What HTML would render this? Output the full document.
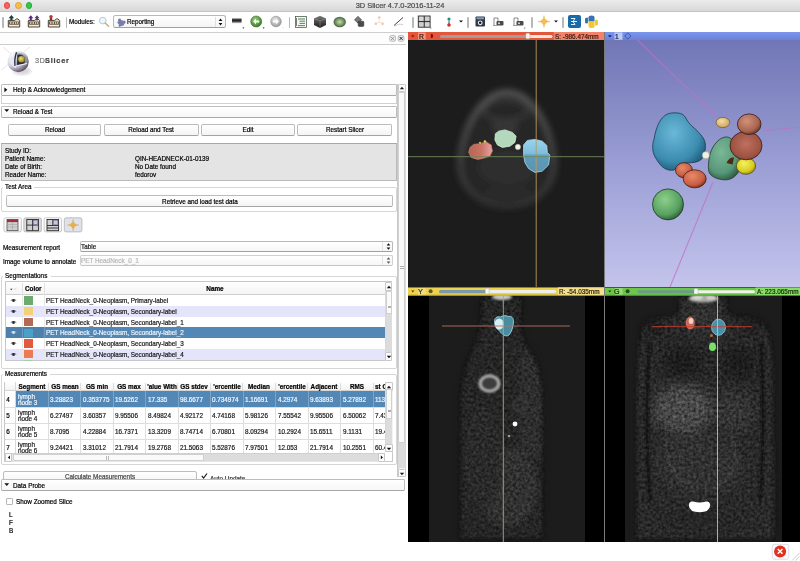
<!DOCTYPE html>
<html><head><meta charset="utf-8">
<style>
html,body{margin:0;padding:0;}
body{width:800px;height:561px;overflow:hidden;position:relative;background:#ffffff;font-family:"Liberation Sans",sans-serif;}
.t{position:absolute;white-space:nowrap;line-height:normal;-webkit-text-stroke:0.2px currentColor;will-change:transform;}
.b{position:absolute;box-sizing:border-box;}
svg{position:absolute;}
</style></head><body>

<div class="b" style="left:0px;top:0px;width:800.00px;height:11.60px;background:linear-gradient(#ececec,#d8d8d8);border-bottom:1px solid #c4c4c4;"></div>
<div class="b" style="left:3.6999999999999997px;top:2.3000000000000003px;width:6.8px;height:6.8px;border-radius:50%;background:#fc605c;border:0.5px solid #de4a46;"></div>
<div class="b" style="left:14.799999999999999px;top:2.3000000000000003px;width:6.8px;height:6.8px;border-radius:50%;background:#fdbc40;border:0.5px solid #dea236;"></div>
<div class="b" style="left:25.5px;top:2.3000000000000003px;width:6.8px;height:6.8px;border-radius:50%;background:#34c84a;border:0.5px solid #27aa35;"></div>
<div class="t" style="left:200px;width:400px;text-align:center;top:1.46px;font-size:7.45px;color:#4a4a4a;font-weight:normal;">3D Slicer 4.7.0-2016-11-24</div>
<div class="b" style="left:0px;top:11.6px;width:800.00px;height:20.40px;background:#ffffff;"></div>
<div class="b" style="left:0px;top:31.5px;width:408.00px;height:1.00px;background:#cfcfcf;"></div>
<div class="b" style="left:2.30px;top:16.5px;width:1.6px;height:11.0px;background:#b8b8b8;border-radius:0.8px;"></div>
<svg style="left:6px;top:13.9px" width="58" height="15" viewBox="0 0 58 15">
<g transform="translate(0,0)">
 <path d="M2.3 13 V6.4 H8.6 L10.6 4.9 H11.9 L13.7 6.6 V13 Z" fill="#e6dac0" stroke="#3a2e20" stroke-width="0.9" stroke-linejoin="round"/>
 <rect x="3.2" y="7.6" width="9.6" height="3" fill="#4a3e2e"/>
 <path d="M4 8.3 H5.6 V9.8 H4 Z M6.4 8.3 H8 V9.8 H6.4 Z M8.8 8.3 H10.4 V9.8 H8.8 Z M11 8.3 H12.2 V9.8 H11 Z" fill="#efe8d8"/>
 <rect x="3.2" y="11.2" width="9.6" height="0.9" fill="#f6f2e8"/>
</g>
<path d="M2.6 4.3 L5.4 1 L8.2 4.3 Z M4.3 4.2 H6.5 V6.2 H4.3 Z" fill="#1e3e38"/>
<g transform="translate(20,0)">
 <path d="M2.3 13 V6.4 H8.6 L10.6 4.9 H11.9 L13.7 6.6 V13 Z" fill="#e6dac0" stroke="#3a2e20" stroke-width="0.9" stroke-linejoin="round"/>
 <rect x="3.2" y="7.6" width="9.6" height="3" fill="#4a3e2e"/>
 <path d="M4 8.3 H5.6 V9.8 H4 Z M6.4 8.3 H8 V9.8 H6.4 Z M8.8 8.3 H10.4 V9.8 H8.8 Z M11 8.3 H12.2 V9.8 H11 Z" fill="#efe8d8"/>
 <rect x="3.2" y="11.2" width="9.6" height="0.9" fill="#f6f2e8"/>
</g>
<path d="M22.2 4.3 L24.8 1.2 L27.4 4.3 Z M23.8 4.2 H25.8 V6.2 H23.8 Z" fill="#5a2a80"/>
<path d="M28.4 4.3 L31 1.2 L33.6 4.3 Z M30 4.2 H32 V6.2 H30 Z" fill="#5a3a7a"/>
<g transform="translate(40,0)">
 <path d="M2.3 13 V6.4 H8.6 L10.6 4.9 H11.9 L13.7 6.6 V13 Z" fill="#e6dac0" stroke="#3a2e20" stroke-width="0.9" stroke-linejoin="round"/>
 <rect x="3.2" y="7.6" width="9.6" height="3" fill="#4a3e2e"/>
 <path d="M4 8.3 H5.6 V9.8 H4 Z M6.4 8.3 H8 V9.8 H6.4 Z M8.8 8.3 H10.4 V9.8 H8.8 Z M11 8.3 H12.2 V9.8 H11 Z" fill="#efe8d8"/>
 <rect x="3.2" y="11.2" width="9.6" height="0.9" fill="#f6f2e8"/>
</g>
<circle cx="45" cy="2.6" r="1.7" fill="#b83a2a"/>
<path d="M43.8 3.8 H46.2 V6.3 H43.8 Z" fill="#7a3a2a"/>
</svg>
<div class="b" style="left:65.90px;top:16.5px;width:1.6px;height:11.0px;background:#b8b8b8;border-radius:0.8px;"></div>
<div class="t" style="left:69px;top:18.1px;font-size:6.36px;color:#000;">Modules:</div>
<svg style="left:98px;top:14.5px" width="13" height="14" viewBox="0 0 13 14">
<circle cx="4.8" cy="5.6" r="3.3" fill="#eef6fa" stroke="#a8c4d4" stroke-width="0.9"/>
<path d="M7.3 8.1 L10.6 11.2" stroke="#c8b080" stroke-width="1.5" stroke-linecap="round"/>
</svg>
<div class="b" style="left:113.3px;top:15.2px;width:112.9px;height:12.5px;background:linear-gradient(#ffffff,#f4f4f4);border:1px solid #b8b8b8;border-bottom-color:#a0a0a0;border-radius:2.5px;"></div>
<div class="b" style="left:215px;top:16.5px;width:0.6px;height:10px;background:#e0e0e0;"></div>
<svg style="left:218px;top:17.5px" width="5" height="8" viewBox="0 0 5 8"><path d="M0.6 3 L4.4 3 L2.5 0.6 Z M0.6 5 L4.4 5 L2.5 7.4 Z" fill="#111"/></svg>
<svg style="left:116px;top:17px" width="10" height="10" viewBox="0 0 10 10">
<g transform="rotate(-20 5 5.5)" fill="#7a7aae">
<rect x="1.6" y="3.6" width="5.6" height="5.4" rx="0.4"/>
<circle cx="4.4" cy="2.9" r="1.6"/>
<circle cx="7.9" cy="6.3" r="1.6"/>
<circle cx="1.2" cy="6.3" r="1.1" fill="#fff"/>
</g>
</svg>
<div class="t" style="left:126.5px;top:18.1px;font-size:6.3px;color:#000;">Reporting</div>
<svg style="left:230px;top:14px" width="56" height="17" viewBox="0 0 56 17">
<defs>
<linearGradient id="hb" x1="0" y1="0" x2="0" y2="1"><stop offset="0" stop-color="#f0f0f0"/><stop offset="0.35" stop-color="#1a1a1a"/><stop offset="0.6" stop-color="#3a3a3a"/><stop offset="1" stop-color="#f4f4f4"/></linearGradient>
<radialGradient id="gg" cx="0.4" cy="0.35" r="0.7"><stop offset="0" stop-color="#9ad07a"/><stop offset="1" stop-color="#2e7a20"/></radialGradient>
<radialGradient id="gr" cx="0.4" cy="0.35" r="0.7"><stop offset="0" stop-color="#e8e8e8"/><stop offset="1" stop-color="#9a9a9a"/></radialGradient>
</defs>
<rect x="2" y="3.8" width="9.6" height="5.8" fill="url(#hb)"/>
<path d="M12.4 13.6 L14.4 13.6 L13.4 14.8 Z" fill="#111"/>
<circle cx="26.2" cy="7.5" r="5.5" fill="url(#gg)" stroke="#3a6a2a" stroke-width="0.6"/>
<path d="M23.2 7.5 L26 4.6 V6.4 H29.2 V8.6 H26 V10.4 Z" fill="#ffffff"/>
<path d="M32.6 13.6 L34.6 13.6 L33.6 14.8 Z" fill="#111"/>
<circle cx="46" cy="7.5" r="5.3" fill="url(#gr)" stroke="#8a8a8a" stroke-width="0.6"/>
<path d="M49 7.5 L46.2 4.6 V6.4 H43 V8.6 H46.2 V10.4 Z" fill="#ffffff"/>
<path d="M52.4 13.8 L53.8 13.8 L53.1 14.6 Z" fill="#aaa"/>
</svg>
<div class="b" style="left:288.70px;top:16.5px;width:1.6px;height:11.0px;background:#b8b8b8;border-radius:0.8px;"></div>
<svg style="left:293px;top:14px" width="116" height="16" viewBox="0 0 116 16">
<defs>
<linearGradient id="cube" x1="0" y1="0" x2="0" y2="1"><stop offset="0" stop-color="#7a7a7a"/><stop offset="1" stop-color="#1a1a1a"/></linearGradient>
<radialGradient id="vr" cx="0.5" cy="0.5" r="0.6"><stop offset="0" stop-color="#c8e0b0"/><stop offset="0.6" stop-color="#6a8a5a"/><stop offset="1" stop-color="#2a3a2a"/></radialGradient>
</defs>
<rect x="2.5" y="2.5" width="11" height="11" fill="#f4f8f0" stroke="#3a4a3a" stroke-width="0.7"/>
<path d="M5 5 H12 M6.5 7.2 H12 M6.5 9.4 H12 M5 11.6 H12" stroke="#2a6a4a" stroke-width="0.8"/>
<path d="M3.5 4 V12" stroke="#2a2a2a" stroke-width="0.6"/>
<path d="M21 4.5 L27 1.8 L33 4.5 L33 11 L27 14 L21 11 Z" fill="url(#cube)"/>
<path d="M21 4.5 L27 7 L33 4.5 M27 7 V14" stroke="#9a9a9a" stroke-width="0.5" fill="none"/>
<ellipse cx="46.7" cy="8" rx="6.2" ry="5.3" fill="url(#vr)"/>
<path d="M61.5 5.8 L65 2.4 L68.5 5.8 L65 9.2 Z" fill="#7a7a7a" stroke="#3a3a3a" stroke-width="0.7"/>
<rect x="65.2" y="7.2" width="5.6" height="5.2" rx="0.8" fill="#4a4a4a" stroke="#2a2a2a" stroke-width="0.5"/>
<circle cx="86.2" cy="3.6" r="1.3" fill="#f4c4a8"/>
<circle cx="82.8" cy="9.8" r="1.3" fill="#f4c4a8"/>
<circle cx="89.6" cy="9.8" r="1.3" fill="#f4c4a8"/>
<path d="M86.2 5.5 V7.5 M84 8.5 L88.4 8.5" stroke="#e8c0a8" stroke-width="0.5"/>
<path d="M101 11.5 L110 3.5" stroke="#2a2a2a" stroke-width="0.9"/>
<path d="M102 12 Q106 9 110 10.5" stroke="#c8a0a0" stroke-width="0.6" fill="none"/>
</svg>
<div class="b" style="left:412.20px;top:16.5px;width:1.6px;height:11.0px;background:#b8b8b8;border-radius:0.8px;"></div>
<svg style="left:416px;top:14px" width="58" height="17" viewBox="0 0 58 17">
<rect x="2.3" y="2" width="11.8" height="11.2" fill="#b8b8b8" stroke="#2a2a2a" stroke-width="0.9"/>
<path d="M8.2 2 V13.2 M2.3 7.6 H14.1" stroke="#2a2a2a" stroke-width="1"/>
<rect x="3.2" y="2.8" width="4.2" height="4" fill="#d8d8d8"/>
<rect x="9" y="2.8" width="4.3" height="4" fill="#cfcfcf"/>
<rect x="3.2" y="8.4" width="4.2" height="4" fill="#d0d0d0"/>
<rect x="9" y="8.4" width="4.3" height="4" fill="#d4d4d4"/>
<path d="M14.2 13.8 L15.6 13.8 L14.9 14.8 Z" fill="#111"/>
<circle cx="33" cy="5" r="1.6" fill="#2a8a7a"/>
<path d="M33 6.5 V10" stroke="#2a5a5a" stroke-width="1"/>
<circle cx="33" cy="11" r="1.8" fill="#d03030"/>
<path d="M43 6.4 L47 6.4 L45 8.6 Z" fill="#111"/>
</svg>
<div class="b" style="left:467.20px;top:16.5px;width:1.6px;height:11.0px;background:#b8b8b8;border-radius:0.8px;"></div>
<svg style="left:472px;top:14px" width="60" height="17" viewBox="0 0 60 17">
<rect x="3.5" y="2.5" width="9.5" height="10" rx="1" fill="#2a3a4a"/>
<rect x="4.5" y="3.3" width="7.5" height="2" fill="#8a9ab0"/>
<circle cx="8.2" cy="8.8" r="2.4" fill="#f0f0f0"/>
<circle cx="8.2" cy="8.8" r="1.3" fill="#1a1a1a"/>
<path d="M22 11 L22 4 L26 4 L26 7" stroke="#5a5a5a" stroke-width="0.7" fill="none"/>
<rect x="24.5" y="7" width="7" height="4.5" rx="1" fill="#4a4a4a"/>
<circle cx="27" cy="9.2" r="1" fill="#ddd"/>
<path d="M21 11.5 H25" stroke="#5a5a5a" stroke-width="0.6"/>
<path d="M42 11 L42 4 L46 4 L46 7" stroke="#5a5a5a" stroke-width="0.7" fill="none"/>
<rect x="44.5" y="7" width="7" height="4.5" rx="1" fill="#4a4a4a"/>
<circle cx="47" cy="9.2" r="1" fill="#ddd"/>
<path d="M41 11.5 H45" stroke="#5a5a5a" stroke-width="0.6"/>
<path d="M52 13.8 L53.6 13.8 L52.8 14.8 Z" fill="#111"/>
</svg>
<div class="b" style="left:531.20px;top:16.5px;width:1.6px;height:11.0px;background:#b8b8b8;border-radius:0.8px;"></div>
<svg style="left:535px;top:14px" width="70" height="17" viewBox="0 0 70 17">
<path d="M9 1.6 Q9.2 7.2 15 7.6 Q9.2 8 9 13.6 Q8.8 8 3 7.6 Q8.8 7.2 9 1.6 Z" fill="#f2c050" stroke="#d8a040" stroke-width="0.35"/>
<path d="M19 6.4 L23 6.4 L21 8.6 Z" fill="#111"/>
<rect x="33" y="1" width="13" height="13" rx="2" fill="#1a6aa8"/>
<path d="M36 4.5 H40 M36 7.5 H42 M36 10.5 H40 M40 4.5 L38 7.5 L40 10.5" stroke="#ffffff" stroke-width="0.9" fill="none"/>
<path d="M53.5 7 V3.5 Q53.5 1.5 56.5 1.5 Q59.5 1.5 59.5 3.5 V7.5 H54.5 Q53.5 7.5 53.5 7 Z" fill="#3a72b0"/>
<path d="M53.5 7.5 H58.5 Q59.5 7.5 59.5 8 V13 Q59.5 14 56.5 14 Q53.5 14 53.5 12 V8" fill="#f2c830"/>
<path d="M50 5 Q50 3.5 53 3.5 V8.5 Q53 9.5 51.5 9.5 Q50 9.5 50 8 Z" fill="#3a72b0"/>
<path d="M63 10 Q63 11.5 60 11.5 V6.5 Q60 5.5 61.5 5.5 Q63 5.5 63 7 Z" fill="#f2c830"/>
</svg>
<div class="b" style="left:562.20px;top:16.5px;width:1.6px;height:11.0px;background:#b8b8b8;border-radius:0.8px;"></div>
<div class="b" style="left:0.00px;top:32.00px;width:405.50px;height:13.00px;background:#fdfdfd;border-top:1px solid #cfcfcf;border-bottom:1px solid #cdcdcd;"></div>
<svg style="left:388.5px;top:34.5px" width="17" height="7" viewBox="0 0 17 7">
<rect x="0.7" y="0.5" width="5.8" height="5.8" rx="1.6" fill="#ececec" stroke="#9a9a9a" stroke-width="0.6"/>
<path d="M2 2 L5.2 5 M5.2 2 L2 5" stroke="#6a6a6a" stroke-width="0.6"/>
<rect x="9.2" y="0.5" width="5.8" height="5.8" rx="1.6" fill="#ececec" stroke="#9a9a9a" stroke-width="0.6"/>
<path d="M10.6 1.9 L13.6 4.9 M13.6 1.9 L10.6 4.9" stroke="#2a2a2a" stroke-width="1"/>
</svg>
<svg style="left:0px;top:44px" width="75" height="40" viewBox="0 0 40 40" preserveAspectRatio="xMinYMin meet">
<defs>
<radialGradient id="lg1" cx="0.3" cy="0.25" r="0.85"><stop offset="0" stop-color="#ffffff"/><stop offset="0.55" stop-color="#d4d4e0"/><stop offset="0.85" stop-color="#7a6a80"/><stop offset="1" stop-color="#4a3a48"/></radialGradient>
<radialGradient id="lg2" cx="0.4" cy="0.4" r="0.7"><stop offset="0" stop-color="#f0e060"/><stop offset="1" stop-color="#8a7a20"/></radialGradient>
<filter id="lgs"><feGaussianBlur stdDeviation="1.8"/></filter>
</defs>
<ellipse cx="22" cy="27" rx="9" ry="4" fill="#a8a8b0" opacity="0.45" filter="url(#lgs)"/>
<path d="M3 3 L32 28 M1 26 L30 3" stroke="#e4dce8" stroke-width="0.8"/>
<circle cx="18.2" cy="17.6" r="10.6" fill="url(#lg1)"/>
<path d="M8 17 L16 8.4 L15.5 24.5 Z" fill="#e8e8f0"/>
<path d="M16.6 8.2 Q14.2 14 15 22" stroke="#2a3048" stroke-width="1.4" fill="none"/>
<path d="M17 9.5 Q24 8 27 15 L26 21 L16.2 22.5 Z" fill="#8a90a8"/>
<path d="M17.5 11 Q22.5 9.5 25 14.5 L24.5 19.5 L17 21 Z" fill="#2a2a30"/>
<circle cx="21.5" cy="15.2" r="3.3" fill="url(#lg2)"/>
<path d="M15.2 22.3 L27 19.5" stroke="#f4f4f8" stroke-width="1.1"/>
</svg>
<div class="t" style="left:34.6px;top:55.6px;font-size:7.4px;color:#7a7a7a;letter-spacing:0.3px;">3D<span style="color:#3e3e3e;font-weight:bold;letter-spacing:0.75px;">Slicer</span></div>
<div class="b" style="left:397.50px;top:83.80px;width:8.00px;height:393.20px;background:#f6f6f6;border-left:1px solid #d8d8d8;border-right:1px solid #d8d8d8;"></div>
<div class="b" style="left:396.90px;top:83.80px;width:0.70px;height:393.20px;background:#c8c8c8;"></div>
<div class="b" style="left:397.50px;top:83.80px;width:8.00px;height:8.20px;background:#fcfcfc;border:1px solid #c8c8c8;border-radius:1.5px;"></div>
<svg style="left:398.5px;top:86px" width="6" height="4" viewBox="0 0 6 4"><path d="M0.8 3.2 L5.2 3.2 L3 0.8 Z" fill="#1a1a1a"/></svg>
<div class="b" style="left:398.50px;top:92.00px;width:6.00px;height:376.00px;background:#dcdcdc;"></div>
<div class="b" style="left:398.30px;top:92.00px;width:6.40px;height:350.50px;background:#fafafa;border:0.6px solid #d0d0d0;border-radius:1px;"></div>
<div class="b" style="left:399.5px;top:265.5px;width:4px;height:3px;border-top:0.6px solid #b0b0b0;border-bottom:0.6px solid #b0b0b0;"></div>
<div class="b" style="left:397.50px;top:468.50px;width:8.00px;height:8.50px;background:#fcfcfc;border:1px solid #c8c8c8;border-radius:1.5px;"></div>
<svg style="left:398.5px;top:471.5px" width="6" height="4" viewBox="0 0 6 4"><path d="M0.8 0.8 L5.2 0.8 L3 3.2 Z" fill="#1a1a1a"/></svg>
<div class="b" style="left:0.50px;top:84.00px;width:396.50px;height:11.50px;background:linear-gradient(#ffffff,#f7f7f7);border:1px solid #bdbdbd;border-bottom-color:#a8a8a8;border-radius:1.5px;"></div>
<svg style="left:4px;top:86.80px" width="4" height="6" viewBox="0 0 4 6"><path d="M0.4 0.4 L3.4 2.8 L0.4 5.2 Z" fill="#111"/></svg>
<div class="t" style="left:12.50px;top:86.45px;font-size:6.35px;color:#000;font-weight:normal;">Help &amp; Acknowledgement</div>
<div class="b" style="left:0.50px;top:95.50px;width:396.50px;height:8.00px;border:1px solid #d0d0d0;border-top:none;"></div>
<div class="b" style="left:0.50px;top:106.00px;width:396.50px;height:11.50px;background:linear-gradient(#ffffff,#f7f7f7);border:1px solid #bdbdbd;border-bottom-color:#a8a8a8;border-radius:1.5px;"></div>
<svg style="left:3.5px;top:109.40px" width="6" height="4" viewBox="0 0 6 4"><path d="M0.3 0.3 L5.2 0.3 L2.75 3.1 Z" fill="#111"/></svg>
<div class="t" style="left:12.50px;top:108.45px;font-size:6.35px;color:#000;font-weight:normal;">Reload &amp; Test</div>
<div class="b" style="left:7.80px;top:124.40px;width:93.60px;height:11.60px;background:linear-gradient(#ffffff,#f4f4f4);border:1px solid #bcbcbc;border-bottom-color:#a4a4a4;border-radius:2px;"></div>
<div class="t" style="left:-95.40px;width:300px;text-align:center;top:126.35px;font-size:6.35px;color:#000;font-weight:normal;">Reload</div>
<div class="b" style="left:103.50px;top:124.40px;width:95.00px;height:11.60px;background:linear-gradient(#ffffff,#f4f4f4);border:1px solid #bcbcbc;border-bottom-color:#a4a4a4;border-radius:2px;"></div>
<div class="t" style="left:1.00px;width:300px;text-align:center;top:126.35px;font-size:6.35px;color:#000;font-weight:normal;">Reload and Test</div>
<div class="b" style="left:200.60px;top:124.40px;width:94.80px;height:11.60px;background:linear-gradient(#ffffff,#f4f4f4);border:1px solid #bcbcbc;border-bottom-color:#a4a4a4;border-radius:2px;"></div>
<div class="t" style="left:98.00px;width:300px;text-align:center;top:126.35px;font-size:6.35px;color:#000;font-weight:normal;">Edit</div>
<div class="b" style="left:297.40px;top:124.40px;width:94.50px;height:11.60px;background:linear-gradient(#ffffff,#f4f4f4);border:1px solid #bcbcbc;border-bottom-color:#a4a4a4;border-radius:2px;"></div>
<div class="t" style="left:194.65px;width:300px;text-align:center;top:126.35px;font-size:6.35px;color:#000;font-weight:normal;">Restart Slicer</div>
<div class="b" style="left:0.50px;top:143.30px;width:396.90px;height:38.20px;background:#e4e4e4;border:1px solid #bababa;border-top-color:#a8a8a8;"></div>
<div class="t" style="left:4.80px;top:147.45px;font-size:6.35px;color:#000;font-weight:normal;">Study ID:</div>
<div class="t" style="left:4.80px;top:155.30px;font-size:6.35px;color:#000;font-weight:normal;">Patient Name:</div>
<div class="t" style="left:134.60px;top:155.30px;font-size:6.35px;color:#000;font-weight:normal;">QIN-HEADNECK-01-0139</div>
<div class="t" style="left:4.80px;top:163.15px;font-size:6.35px;color:#000;font-weight:normal;">Date of Birth:</div>
<div class="t" style="left:134.60px;top:163.15px;font-size:6.35px;color:#000;font-weight:normal;">No Date found</div>
<div class="t" style="left:4.80px;top:171.00px;font-size:6.35px;color:#000;font-weight:normal;">Reader Name:</div>
<div class="t" style="left:134.60px;top:171.00px;font-size:6.35px;color:#000;font-weight:normal;">fedorov</div>
<div class="b" style="left:0.8px;top:187.40px;width:396.4px;height:24.20px;border:1px solid #d6d6d6;border-radius:2px;"></div>
<div class="b" style="left:3.00px;top:183.40px;width:30.50px;height:7.00px;background:#fff;"></div>
<div class="t" style="left:4.80px;top:183.25px;font-size:6.35px;color:#000;font-weight:normal;">Test Area</div>
<div class="b" style="left:6.00px;top:195.20px;width:387.00px;height:11.80px;background:linear-gradient(#ffffff,#f4f4f4);border:1px solid #bcbcbc;border-bottom-color:#a4a4a4;border-radius:2px;"></div>
<div class="t" style="left:49.50px;width:300px;text-align:center;top:197.85px;font-size:6.35px;color:#000;font-weight:normal;">Retrieve and load test data</div>
<svg style="left:3px;top:216.5px" width="80" height="16" viewBox="0 0 80 16">
<defs><linearGradient id="btng" x1="0" y1="0" x2="0" y2="1"><stop offset="0" stop-color="#ffffff"/><stop offset="1" stop-color="#f2f2f2"/></linearGradient></defs>
<rect x="0.9" y="0.8" width="17.5" height="14.1" rx="1.8" fill="url(#btng)" stroke="#b4b4b4" stroke-width="0.7"/>
<rect x="20.8" y="0.8" width="17.6" height="14.1" rx="1.8" fill="#dcdcdc" stroke="#a8a8a8" stroke-width="0.7"/>
<rect x="41.1" y="0.8" width="17.5" height="14.1" rx="1.8" fill="url(#btng)" stroke="#b4b4b4" stroke-width="0.7"/>
<rect x="61.3" y="0.8" width="17.6" height="14.1" rx="1.8" fill="#dfe2ea" stroke="#a8a8a8" stroke-width="0.7"/>
<!-- icon1 table -->
<rect x="4" y="2.5" width="11" height="11.2" fill="#cfcfcf" stroke="#3a3a3a" stroke-width="0.7"/>
<rect x="4" y="2.5" width="11" height="2.6" fill="#a0303a"/>
<path d="M4 7.5 H15 M4 10 H15 M9.5 5 V13.7" stroke="#9a9a9a" stroke-width="0.5"/>
<!-- icon2 grid -->
<rect x="23.8" y="2.5" width="11.6" height="11.2" fill="#d0d0d0" stroke="#2a2a2a" stroke-width="0.9"/>
<path d="M29.6 2.5 V13.7 M23.8 8.1 H35.4" stroke="#2a2a2a" stroke-width="0.9"/>
<rect x="30.4" y="3.3" width="4.3" height="4" fill="#c8c8e0" stroke="#4a4a8a" stroke-width="0.4"/>
<!-- icon3 -->
<rect x="44" y="2.5" width="11.6" height="11.2" fill="#d0d0d0" stroke="#2a2a2a" stroke-width="0.9"/>
<path d="M49.8 2.5 V8.5 M44 8.5 H55.6 M44 11 H55.6" stroke="#2a2a2a" stroke-width="0.9"/>
<rect x="50.6" y="3.3" width="4.3" height="4.4" fill="#c8c8e0" stroke="#4a4a8a" stroke-width="0.4"/>
<!-- icon4 star -->
<path d="M70.1 2.4 Q70.3 7.8 75.8 8 Q70.3 8.2 70.1 13.6 Q69.9 8.2 64.4 8 Q69.9 7.8 70.1 2.4 Z" fill="#eab048" stroke="#d09838" stroke-width="0.35"/>
</svg>
<div class="t" style="left:3.10px;top:243.55px;font-size:6.35px;color:#000;font-weight:normal;">Measurement report</div>
<div class="t" style="left:3.10px;top:257.85px;font-size:6.35px;color:#000;font-weight:normal;">Image volume to annotate</div>
<div class="b" style="left:79.6px;top:241.40px;width:313.7px;height:11.00px;background:linear-gradient(#ffffff,#f6f6f6);border:1px solid #b8b8b8;border-bottom-color:#a0a0a0;border-radius:2px;"></div>
<div class="b" style="left:382.40px;top:242.40px;width:0.50px;height:9.00px;background:#e4e4e4;"></div>
<svg style="left:385.5px;top:243.40px" width="5" height="7" viewBox="0 0 5 7"><path d="M0.6 2.6 L4.4 2.6 L2.5 0.3 Z M0.6 4.4 L4.4 4.4 L2.5 6.7 Z" fill="#111"/></svg>
<div class="t" style="left:81.30px;top:243.45px;font-size:6.35px;color:#1a1a1a;font-weight:normal;">Table</div>
<div class="b" style="left:79.6px;top:255.30px;width:313.7px;height:11.00px;background:linear-gradient(#ffffff,#f6f6f6);border:1px solid #d0d0d0;border-bottom-color:#c4c4c4;border-radius:2px;"></div>
<div class="b" style="left:382.40px;top:256.30px;width:0.50px;height:9.00px;background:#e4e4e4;"></div>
<svg style="left:385.5px;top:257.30px" width="5" height="7" viewBox="0 0 5 7"><path d="M0.6 2.6 L4.4 2.6 L2.5 0.3 Z M0.6 4.4 L4.4 4.4 L2.5 6.7 Z" fill="#5a5a5a"/></svg>
<div class="t" style="left:81.30px;top:257.35px;font-size:6.35px;color:#b8b8b8;font-weight:normal;">PET HeadNeck_0_1</div>
<div class="b" style="left:0.8px;top:276.20px;width:396.4px;height:92.40px;border:1px solid #d6d6d6;border-radius:2px;"></div>
<div class="b" style="left:3.00px;top:272.20px;width:47.50px;height:7.00px;background:#fff;"></div>
<div class="t" style="left:4.80px;top:272.05px;font-size:6.35px;color:#000;font-weight:normal;">Segmentations</div>
<div class="b" style="left:4.80px;top:281.30px;width:387.60px;height:80.20px;background:#fff;border:1px solid #c8c8c8;"></div>
<div class="b" style="left:5.50px;top:282.00px;width:379.80px;height:13.20px;background:linear-gradient(#ffffff,#f4f4f4);border-bottom:1px solid #d0d0d0;"></div>
<div class="b" style="left:22.30px;top:283.00px;width:0.50px;height:11.50px;background:#e0e0e0;"></div>
<div class="b" style="left:43.50px;top:283.00px;width:0.50px;height:11.50px;background:#e0e0e0;"></div>
<svg style="left:9px;top:285.5px" width="9" height="6" viewBox="0 0 9 6"><path d="M1 2.8 L3.6 2.8 L2.3 4.3 Z" fill="#3a3a3a"/><path d="M5 2.6 L6 3.8 L7.2 1.8" stroke="#bbb" stroke-width="0.5" fill="none"/></svg>
<div class="t" style="left:25.00px;top:285.25px;font-size:6.35px;color:#000;font-weight:bold;">Color</div>
<div class="t" style="left:64.50px;width:300px;text-align:center;top:285.25px;font-size:6.35px;color:#000;font-weight:bold;">Name</div>
<div class="b" style="left:5.50px;top:295.20px;width:379.80px;height:10.72px;background:#ffffff;"></div>
<div class="b" style="left:22.30px;top:295.20px;width:0.50px;height:10.72px;background:#e8e8e8;"></div>
<div class="b" style="left:43.50px;top:295.20px;width:0.50px;height:10.72px;background:#e8e8e8;"></div>
<svg style="left:10px;top:298.20px" width="7" height="5" viewBox="0 0 7 5"><path d="M0.3 2.6 Q3.5 -0.6 6.7 2.6 Q5.5 2.2 3.5 2.2 Q1.5 2.2 0.3 2.6 Z" fill="#2a2a2a"/><circle cx="3.5" cy="2.7" r="1.3" fill="#2a2a2a"/></svg>
<div class="b" style="left:24.20px;top:296.40px;width:8.80px;height:8.32px;background:#6daa6e;"></div>
<div class="t" style="left:46.00px;top:297.15px;font-size:6.35px;color:#1a1a1a;font-weight:normal;">PET HeadNeck_0-Neoplasm, Primary-label</div>
<div class="b" style="left:5.50px;top:305.92px;width:379.80px;height:10.72px;background:#e4e4fb;"></div>
<div class="b" style="left:22.30px;top:305.92px;width:0.50px;height:10.72px;background:#e8e8e8;"></div>
<div class="b" style="left:43.50px;top:305.92px;width:0.50px;height:10.72px;background:#e8e8e8;"></div>
<svg style="left:10px;top:308.92px" width="7" height="5" viewBox="0 0 7 5"><path d="M0.3 2.6 Q3.5 -0.6 6.7 2.6 Q5.5 2.2 3.5 2.2 Q1.5 2.2 0.3 2.6 Z" fill="#2a2a2a"/><circle cx="3.5" cy="2.7" r="1.3" fill="#2a2a2a"/></svg>
<div class="b" style="left:24.20px;top:307.12px;width:8.80px;height:8.32px;background:#f4cf7c;"></div>
<div class="t" style="left:46.00px;top:307.87px;font-size:6.35px;color:#1a1a1a;font-weight:normal;">PET HeadNeck_0-Neoplasm, Secondary-label</div>
<div class="b" style="left:5.50px;top:316.64px;width:379.80px;height:10.72px;background:#ffffff;"></div>
<div class="b" style="left:22.30px;top:316.64px;width:0.50px;height:10.72px;background:#e8e8e8;"></div>
<div class="b" style="left:43.50px;top:316.64px;width:0.50px;height:10.72px;background:#e8e8e8;"></div>
<svg style="left:10px;top:319.64px" width="7" height="5" viewBox="0 0 7 5"><path d="M0.3 2.6 Q3.5 -0.6 6.7 2.6 Q5.5 2.2 3.5 2.2 Q1.5 2.2 0.3 2.6 Z" fill="#2a2a2a"/><circle cx="3.5" cy="2.7" r="1.3" fill="#2a2a2a"/></svg>
<div class="b" style="left:24.20px;top:317.84px;width:8.80px;height:8.32px;background:#b26a52;"></div>
<div class="t" style="left:46.00px;top:318.59px;font-size:6.35px;color:#1a1a1a;font-weight:normal;">PET HeadNeck_0-Neoplasm, Secondary-label_1</div>
<div class="b" style="left:5.50px;top:327.36px;width:379.80px;height:10.72px;background:#5387b6;"></div>
<div class="b" style="left:5.50px;top:327.36px;width:16.80px;height:10.72px;background:#4d80ad;"></div>
<div class="b" style="left:22.80px;top:327.36px;width:20.70px;height:10.72px;background:#4d80ad;"></div>
<div class="b" style="left:22.30px;top:327.36px;width:0.50px;height:10.72px;background:#6a98c0;"></div>
<div class="b" style="left:43.50px;top:327.36px;width:0.50px;height:10.72px;background:#6a98c0;"></div>
<svg style="left:10px;top:330.36px" width="7" height="5" viewBox="0 0 7 5"><path d="M0.3 2.6 Q3.5 -0.6 6.7 2.6 Q5.5 2.2 3.5 2.2 Q1.5 2.2 0.3 2.6 Z" fill="#d8e8f0"/><circle cx="3.5" cy="2.7" r="1.3" fill="#d8e8f0"/></svg>
<div class="b" style="left:24.20px;top:328.56px;width:8.80px;height:8.32px;background:#4aa0c8;"></div>
<div class="t" style="left:46.00px;top:329.31px;font-size:6.35px;color:#eaf2fa;font-weight:normal;">PET HeadNeck_0-Neoplasm, Secondary-label_2</div>
<div class="b" style="left:5.50px;top:338.08px;width:379.80px;height:10.72px;background:#ffffff;"></div>
<div class="b" style="left:22.30px;top:338.08px;width:0.50px;height:10.72px;background:#e8e8e8;"></div>
<div class="b" style="left:43.50px;top:338.08px;width:0.50px;height:10.72px;background:#e8e8e8;"></div>
<svg style="left:10px;top:341.08px" width="7" height="5" viewBox="0 0 7 5"><path d="M0.3 2.6 Q3.5 -0.6 6.7 2.6 Q5.5 2.2 3.5 2.2 Q1.5 2.2 0.3 2.6 Z" fill="#2a2a2a"/><circle cx="3.5" cy="2.7" r="1.3" fill="#2a2a2a"/></svg>
<div class="b" style="left:24.20px;top:339.28px;width:8.80px;height:8.32px;background:#e05a40;"></div>
<div class="t" style="left:46.00px;top:340.03px;font-size:6.35px;color:#1a1a1a;font-weight:normal;">PET HeadNeck_0-Neoplasm, Secondary-label_3</div>
<div class="b" style="left:5.50px;top:348.80px;width:379.80px;height:10.72px;background:#e4e4fb;"></div>
<div class="b" style="left:22.30px;top:348.80px;width:0.50px;height:10.72px;background:#e8e8e8;"></div>
<div class="b" style="left:43.50px;top:348.80px;width:0.50px;height:10.72px;background:#e8e8e8;"></div>
<svg style="left:10px;top:351.80px" width="7" height="5" viewBox="0 0 7 5"><path d="M0.3 2.6 Q3.5 -0.6 6.7 2.6 Q5.5 2.2 3.5 2.2 Q1.5 2.2 0.3 2.6 Z" fill="#2a2a2a"/><circle cx="3.5" cy="2.7" r="1.3" fill="#2a2a2a"/></svg>
<div class="b" style="left:24.20px;top:350.00px;width:8.80px;height:8.32px;background:#ec7a52;"></div>
<div class="t" style="left:46.00px;top:350.75px;font-size:6.35px;color:#1a1a1a;font-weight:normal;">PET HeadNeck_0-Neoplasm, Secondary-label_4</div>
<div class="b" style="left:24.20px;top:360.20px;width:8.80px;height:0.80px;background:#a8d0a8;"></div>
<div class="b" style="left:385.30px;top:282.00px;width:6.70px;height:79.00px;background:#f2f2f2;border-left:1px solid #d8d8d8;"></div>
<div class="b" style="left:385.30px;top:282.00px;width:6.70px;height:9.00px;background:#fcfcfc;border:1px solid #c8c8c8;border-radius:1px;"></div>
<svg style="left:386px;top:284.5px" width="6" height="4" viewBox="0 0 6 4"><path d="M0.8 3.2 L5.2 3.2 L3 0.8 Z" fill="#111"/></svg>
<div class="b" style="left:386.00px;top:291.00px;width:6.00px;height:61.00px;background:#dcdcdc;"></div>
<div class="b" style="left:386.00px;top:291.00px;width:6.00px;height:23.00px;background:#fafafa;border:0.6px solid #d0d0d0;"></div>
<div class="b" style="left:387.5px;top:305.5px;width:3px;height:2.5px;border-top:0.5px solid #b0b0b0;border-bottom:0.5px solid #b0b0b0;"></div>
<div class="b" style="left:385.30px;top:352.00px;width:6.70px;height:9.00px;background:#fcfcfc;border:1px solid #c8c8c8;border-radius:1px;"></div>
<svg style="left:386px;top:354.5px" width="6" height="4" viewBox="0 0 6 4"><path d="M0.8 0.8 L5.2 0.8 L3 3.2 Z" fill="#111"/></svg>
<div class="b" style="left:0.8px;top:374.40px;width:396.4px;height:90.60px;border:1px solid #d6d6d6;border-radius:2px;"></div>
<div class="b" style="left:3.00px;top:370.40px;width:46.50px;height:7.00px;background:#fff;"></div>
<div class="t" style="left:4.80px;top:370.25px;font-size:6.35px;color:#000;font-weight:normal;">Measurements</div>
<div class="b" style="left:4.20px;top:381.50px;width:389.30px;height:80.50px;background:#fff;border:1px solid #c8c8c8;"></div>
<div class="b" style="left:4.80px;top:382.20px;width:380.20px;height:9.00px;background:linear-gradient(#ffffff,#f3f3f3);border-bottom:1px solid #d4d4d4;"></div>
<div class="b" style="left:4.8px;top:382.2px;width:380.2px;height:70.8px;overflow:hidden;">
<div class="b" style="left:42.90px;top:1px;width:0.6px;height:8px;background:#dcdcdc;"></div>
<div class="t" style="left:-33.10px;width:120px;text-align:center;top:0.35px;font-size:6.35px;color:#000;font-weight:bold;">Segment</div>
<div class="b" style="left:75.50px;top:1px;width:0.6px;height:8px;background:#dcdcdc;"></div>
<div class="t" style="left:-0.30px;width:120px;text-align:center;top:0.35px;font-size:6.35px;color:#000;font-weight:bold;">GS mean</div>
<div class="b" style="left:107.90px;top:1px;width:0.6px;height:8px;background:#dcdcdc;"></div>
<div class="t" style="left:32.20px;width:120px;text-align:center;top:0.35px;font-size:6.35px;color:#000;font-weight:bold;">GS min</div>
<div class="b" style="left:140.30px;top:1px;width:0.6px;height:8px;background:#dcdcdc;"></div>
<div class="t" style="left:64.60px;width:120px;text-align:center;top:0.35px;font-size:6.35px;color:#000;font-weight:bold;">GS max</div>
<div class="b" style="left:172.70px;top:1px;width:0.6px;height:8px;background:#dcdcdc;"></div>
<div class="t" style="left:97.00px;width:120px;text-align:center;top:0.35px;font-size:6.35px;color:#000;font-weight:bold;">'alue With</div>
<div class="b" style="left:205.20px;top:1px;width:0.6px;height:8px;background:#dcdcdc;"></div>
<div class="t" style="left:129.45px;width:120px;text-align:center;top:0.35px;font-size:6.35px;color:#000;font-weight:bold;">GS stdev</div>
<div class="b" style="left:237.70px;top:1px;width:0.6px;height:8px;background:#dcdcdc;"></div>
<div class="t" style="left:161.95px;width:120px;text-align:center;top:0.35px;font-size:6.35px;color:#000;font-weight:bold;">'ercentile</div>
<div class="b" style="left:270.30px;top:1px;width:0.6px;height:8px;background:#dcdcdc;"></div>
<div class="t" style="left:194.50px;width:120px;text-align:center;top:0.35px;font-size:6.35px;color:#000;font-weight:bold;">Median</div>
<div class="b" style="left:302.70px;top:1px;width:0.6px;height:8px;background:#dcdcdc;"></div>
<div class="t" style="left:227.00px;width:120px;text-align:center;top:0.35px;font-size:6.35px;color:#000;font-weight:bold;">'ercentile</div>
<div class="b" style="left:335.30px;top:1px;width:0.6px;height:8px;background:#dcdcdc;"></div>
<div class="t" style="left:259.50px;width:120px;text-align:center;top:0.35px;font-size:6.35px;color:#000;font-weight:bold;">Adjacent</div>
<div class="b" style="left:368.10px;top:1px;width:0.6px;height:8px;background:#dcdcdc;"></div>
<div class="t" style="left:292.20px;width:120px;text-align:center;top:0.35px;font-size:6.35px;color:#000;font-weight:bold;">RMS</div>
<div class="b" style="left:400.50px;top:1px;width:0.6px;height:8px;background:#dcdcdc;"></div>
<div class="t" style="left:370.20px;top:0.35px;font-size:6.35px;color:#000;font-weight:bold;">st G</div>
<div class="b" style="left:10.40px;top:9.00px;width:400px;height:16.05px;background:#5387b6;"></div>
<div class="b" style="left:0px;top:24.55px;width:400px;height:0.6px;background:#dedede;"></div>
<div class="b" style="left:43.10px;top:9.00px;width:0.6px;height:16.05px;background:#7aa4c8;"></div>
<div class="b" style="left:75.70px;top:9.00px;width:0.6px;height:16.05px;background:#7aa4c8;"></div>
<div class="b" style="left:108.10px;top:9.00px;width:0.6px;height:16.05px;background:#7aa4c8;"></div>
<div class="b" style="left:140.50px;top:9.00px;width:0.6px;height:16.05px;background:#7aa4c8;"></div>
<div class="b" style="left:172.90px;top:9.00px;width:0.6px;height:16.05px;background:#7aa4c8;"></div>
<div class="b" style="left:205.40px;top:9.00px;width:0.6px;height:16.05px;background:#7aa4c8;"></div>
<div class="b" style="left:237.90px;top:9.00px;width:0.6px;height:16.05px;background:#7aa4c8;"></div>
<div class="b" style="left:270.50px;top:9.00px;width:0.6px;height:16.05px;background:#7aa4c8;"></div>
<div class="b" style="left:302.90px;top:9.00px;width:0.6px;height:16.05px;background:#7aa4c8;"></div>
<div class="b" style="left:335.50px;top:9.00px;width:0.6px;height:16.05px;background:#7aa4c8;"></div>
<div class="b" style="left:368.30px;top:9.00px;width:0.6px;height:16.05px;background:#7aa4c8;"></div>
<div class="t" style="left:-56.80px;width:120px;text-align:center;top:13.85px;font-size:6.35px;color:#000;font-weight:normal;">4</div>
<div class="t" style="left:13.50px;top:11.65px;font-size:6.35px;color:#f0f6fc;font-weight:normal;line-height:6.1px;">lymph<br>node 3</div>
<div class="t" style="left:45.40px;top:13.75px;font-size:6.35px;color:#f0f6fc;font-weight:normal;">3.28823</div>
<div class="t" style="left:78.00px;top:13.75px;font-size:6.35px;color:#f0f6fc;font-weight:normal;">0.353775</div>
<div class="t" style="left:110.40px;top:13.75px;font-size:6.35px;color:#f0f6fc;font-weight:normal;">19.5262</div>
<div class="t" style="left:142.80px;top:13.75px;font-size:6.35px;color:#f0f6fc;font-weight:normal;">17.335</div>
<div class="t" style="left:175.20px;top:13.75px;font-size:6.35px;color:#f0f6fc;font-weight:normal;">98.6677</div>
<div class="t" style="left:207.70px;top:13.75px;font-size:6.35px;color:#f0f6fc;font-weight:normal;">0.734974</div>
<div class="t" style="left:240.20px;top:13.75px;font-size:6.35px;color:#f0f6fc;font-weight:normal;">1.16691</div>
<div class="t" style="left:272.80px;top:13.75px;font-size:6.35px;color:#f0f6fc;font-weight:normal;">4.2974</div>
<div class="t" style="left:305.20px;top:13.75px;font-size:6.35px;color:#f0f6fc;font-weight:normal;">9.63893</div>
<div class="t" style="left:337.80px;top:13.75px;font-size:6.35px;color:#f0f6fc;font-weight:normal;">5.27892</div>
<div class="t" style="left:370.60px;top:13.75px;font-size:6.35px;color:#f0f6fc;font-weight:normal;">113.</div>
<div class="b" style="left:0px;top:40.60px;width:400px;height:0.6px;background:#dedede;"></div>
<div class="b" style="left:43.10px;top:25.05px;width:0.6px;height:16.05px;background:#dedede;"></div>
<div class="b" style="left:75.70px;top:25.05px;width:0.6px;height:16.05px;background:#dedede;"></div>
<div class="b" style="left:108.10px;top:25.05px;width:0.6px;height:16.05px;background:#dedede;"></div>
<div class="b" style="left:140.50px;top:25.05px;width:0.6px;height:16.05px;background:#dedede;"></div>
<div class="b" style="left:172.90px;top:25.05px;width:0.6px;height:16.05px;background:#dedede;"></div>
<div class="b" style="left:205.40px;top:25.05px;width:0.6px;height:16.05px;background:#dedede;"></div>
<div class="b" style="left:237.90px;top:25.05px;width:0.6px;height:16.05px;background:#dedede;"></div>
<div class="b" style="left:270.50px;top:25.05px;width:0.6px;height:16.05px;background:#dedede;"></div>
<div class="b" style="left:302.90px;top:25.05px;width:0.6px;height:16.05px;background:#dedede;"></div>
<div class="b" style="left:335.50px;top:25.05px;width:0.6px;height:16.05px;background:#dedede;"></div>
<div class="b" style="left:368.30px;top:25.05px;width:0.6px;height:16.05px;background:#dedede;"></div>
<div class="t" style="left:-56.80px;width:120px;text-align:center;top:29.90px;font-size:6.35px;color:#000;font-weight:normal;">5</div>
<div class="t" style="left:13.50px;top:27.70px;font-size:6.35px;color:#1a1a1a;font-weight:normal;line-height:6.1px;">lymph<br>node 4</div>
<div class="t" style="left:45.40px;top:29.80px;font-size:6.35px;color:#1a1a1a;font-weight:normal;">6.27497</div>
<div class="t" style="left:78.00px;top:29.80px;font-size:6.35px;color:#1a1a1a;font-weight:normal;">3.60357</div>
<div class="t" style="left:110.40px;top:29.80px;font-size:6.35px;color:#1a1a1a;font-weight:normal;">9.95506</div>
<div class="t" style="left:142.80px;top:29.80px;font-size:6.35px;color:#1a1a1a;font-weight:normal;">8.49824</div>
<div class="t" style="left:175.20px;top:29.80px;font-size:6.35px;color:#1a1a1a;font-weight:normal;">4.92172</div>
<div class="t" style="left:207.70px;top:29.80px;font-size:6.35px;color:#1a1a1a;font-weight:normal;">4.74168</div>
<div class="t" style="left:240.20px;top:29.80px;font-size:6.35px;color:#1a1a1a;font-weight:normal;">5.98126</div>
<div class="t" style="left:272.80px;top:29.80px;font-size:6.35px;color:#1a1a1a;font-weight:normal;">7.55542</div>
<div class="t" style="left:305.20px;top:29.80px;font-size:6.35px;color:#1a1a1a;font-weight:normal;">9.95506</div>
<div class="t" style="left:337.80px;top:29.80px;font-size:6.35px;color:#1a1a1a;font-weight:normal;">6.50062</div>
<div class="t" style="left:370.60px;top:29.80px;font-size:6.35px;color:#1a1a1a;font-weight:normal;">7.43</div>
<div class="b" style="left:0px;top:56.65px;width:400px;height:0.6px;background:#dedede;"></div>
<div class="b" style="left:43.10px;top:41.10px;width:0.6px;height:16.05px;background:#dedede;"></div>
<div class="b" style="left:75.70px;top:41.10px;width:0.6px;height:16.05px;background:#dedede;"></div>
<div class="b" style="left:108.10px;top:41.10px;width:0.6px;height:16.05px;background:#dedede;"></div>
<div class="b" style="left:140.50px;top:41.10px;width:0.6px;height:16.05px;background:#dedede;"></div>
<div class="b" style="left:172.90px;top:41.10px;width:0.6px;height:16.05px;background:#dedede;"></div>
<div class="b" style="left:205.40px;top:41.10px;width:0.6px;height:16.05px;background:#dedede;"></div>
<div class="b" style="left:237.90px;top:41.10px;width:0.6px;height:16.05px;background:#dedede;"></div>
<div class="b" style="left:270.50px;top:41.10px;width:0.6px;height:16.05px;background:#dedede;"></div>
<div class="b" style="left:302.90px;top:41.10px;width:0.6px;height:16.05px;background:#dedede;"></div>
<div class="b" style="left:335.50px;top:41.10px;width:0.6px;height:16.05px;background:#dedede;"></div>
<div class="b" style="left:368.30px;top:41.10px;width:0.6px;height:16.05px;background:#dedede;"></div>
<div class="t" style="left:-56.80px;width:120px;text-align:center;top:45.95px;font-size:6.35px;color:#000;font-weight:normal;">6</div>
<div class="t" style="left:13.50px;top:43.75px;font-size:6.35px;color:#1a1a1a;font-weight:normal;line-height:6.1px;">lymph<br>node 5</div>
<div class="t" style="left:45.40px;top:45.85px;font-size:6.35px;color:#1a1a1a;font-weight:normal;">8.7095</div>
<div class="t" style="left:78.00px;top:45.85px;font-size:6.35px;color:#1a1a1a;font-weight:normal;">4.22884</div>
<div class="t" style="left:110.40px;top:45.85px;font-size:6.35px;color:#1a1a1a;font-weight:normal;">16.7371</div>
<div class="t" style="left:142.80px;top:45.85px;font-size:6.35px;color:#1a1a1a;font-weight:normal;">13.3209</div>
<div class="t" style="left:175.20px;top:45.85px;font-size:6.35px;color:#1a1a1a;font-weight:normal;">8.74714</div>
<div class="t" style="left:207.70px;top:45.85px;font-size:6.35px;color:#1a1a1a;font-weight:normal;">6.70801</div>
<div class="t" style="left:240.20px;top:45.85px;font-size:6.35px;color:#1a1a1a;font-weight:normal;">8.09294</div>
<div class="t" style="left:272.80px;top:45.85px;font-size:6.35px;color:#1a1a1a;font-weight:normal;">10.2924</div>
<div class="t" style="left:305.20px;top:45.85px;font-size:6.35px;color:#1a1a1a;font-weight:normal;">15.6511</div>
<div class="t" style="left:337.80px;top:45.85px;font-size:6.35px;color:#1a1a1a;font-weight:normal;">9.1131</div>
<div class="t" style="left:370.60px;top:45.85px;font-size:6.35px;color:#1a1a1a;font-weight:normal;">19.4</div>
<div class="b" style="left:0px;top:72.70px;width:400px;height:0.6px;background:#dedede;"></div>
<div class="b" style="left:43.10px;top:57.15px;width:0.6px;height:16.05px;background:#dedede;"></div>
<div class="b" style="left:75.70px;top:57.15px;width:0.6px;height:16.05px;background:#dedede;"></div>
<div class="b" style="left:108.10px;top:57.15px;width:0.6px;height:16.05px;background:#dedede;"></div>
<div class="b" style="left:140.50px;top:57.15px;width:0.6px;height:16.05px;background:#dedede;"></div>
<div class="b" style="left:172.90px;top:57.15px;width:0.6px;height:16.05px;background:#dedede;"></div>
<div class="b" style="left:205.40px;top:57.15px;width:0.6px;height:16.05px;background:#dedede;"></div>
<div class="b" style="left:237.90px;top:57.15px;width:0.6px;height:16.05px;background:#dedede;"></div>
<div class="b" style="left:270.50px;top:57.15px;width:0.6px;height:16.05px;background:#dedede;"></div>
<div class="b" style="left:302.90px;top:57.15px;width:0.6px;height:16.05px;background:#dedede;"></div>
<div class="b" style="left:335.50px;top:57.15px;width:0.6px;height:16.05px;background:#dedede;"></div>
<div class="b" style="left:368.30px;top:57.15px;width:0.6px;height:16.05px;background:#dedede;"></div>
<div class="t" style="left:-56.80px;width:120px;text-align:center;top:62.00px;font-size:6.35px;color:#000;font-weight:normal;">7</div>
<div class="t" style="left:13.50px;top:59.80px;font-size:6.35px;color:#1a1a1a;font-weight:normal;line-height:6.1px;">lymph<br>node 6</div>
<div class="t" style="left:45.40px;top:61.90px;font-size:6.35px;color:#1a1a1a;font-weight:normal;">9.24421</div>
<div class="t" style="left:78.00px;top:61.90px;font-size:6.35px;color:#1a1a1a;font-weight:normal;">3.31012</div>
<div class="t" style="left:110.40px;top:61.90px;font-size:6.35px;color:#1a1a1a;font-weight:normal;">21.7914</div>
<div class="t" style="left:142.80px;top:61.90px;font-size:6.35px;color:#1a1a1a;font-weight:normal;">19.2768</div>
<div class="t" style="left:175.20px;top:61.90px;font-size:6.35px;color:#1a1a1a;font-weight:normal;">21.5063</div>
<div class="t" style="left:207.70px;top:61.90px;font-size:6.35px;color:#1a1a1a;font-weight:normal;">5.52876</div>
<div class="t" style="left:240.20px;top:61.90px;font-size:6.35px;color:#1a1a1a;font-weight:normal;">7.97501</div>
<div class="t" style="left:272.80px;top:61.90px;font-size:6.35px;color:#1a1a1a;font-weight:normal;">12.053</div>
<div class="t" style="left:305.20px;top:61.90px;font-size:6.35px;color:#1a1a1a;font-weight:normal;">21.7914</div>
<div class="t" style="left:337.80px;top:61.90px;font-size:6.35px;color:#1a1a1a;font-weight:normal;">10.2551</div>
<div class="t" style="left:370.60px;top:61.90px;font-size:6.35px;color:#1a1a1a;font-weight:normal;">60.4</div>
</div>
<div class="b" style="left:15.00px;top:382.20px;width:0.60px;height:70.80px;background:#d8d8d8;"></div>
<div class="b" style="left:385.00px;top:382.00px;width:8.00px;height:70.40px;background:#f2f2f2;border-left:1px solid #d8d8d8;"></div>
<div class="b" style="left:385.00px;top:382.00px;width:8.00px;height:9.00px;background:#fcfcfc;border:1px solid #c8c8c8;border-radius:1px;"></div>
<svg style="left:386px;top:384.5px" width="6" height="4" viewBox="0 0 6 4"><path d="M0.8 3.2 L5.2 3.2 L3 0.8 Z" fill="#111"/></svg>
<div class="b" style="left:386.00px;top:391.00px;width:6.00px;height:52.50px;background:#dcdcdc;"></div>
<div class="b" style="left:386.00px;top:389.00px;width:6.00px;height:30.00px;background:#fafafa;border:0.6px solid #d0d0d0;"></div>
<div class="b" style="left:387.5px;top:409.5px;width:3px;height:2.5px;border-top:0.5px solid #b0b0b0;border-bottom:0.5px solid #b0b0b0;"></div>
<div class="b" style="left:385.00px;top:443.50px;width:8.00px;height:8.90px;background:#fcfcfc;border:1px solid #c8c8c8;border-radius:1px;"></div>
<svg style="left:386px;top:446.5px" width="6" height="4" viewBox="0 0 6 4"><path d="M0.8 0.8 L5.2 0.8 L3 3.2 Z" fill="#111"/></svg>
<div class="b" style="left:4.80px;top:453.00px;width:380.20px;height:8.50px;background:#e6e6e6;border-top:1px solid #d0d0d0;"></div>
<div class="b" style="left:4.80px;top:453.00px;width:7.70px;height:8.50px;background:#fcfcfc;border:1px solid #c8c8c8;border-radius:1px;"></div>
<svg style="left:6.5px;top:455px" width="4" height="5" viewBox="0 0 4 5"><path d="M3 0.6 L3 4.2 L0.8 2.4 Z" fill="#111"/></svg>
<div class="b" style="left:12.50px;top:454.00px;width:365.50px;height:7.00px;background:#dcdcdc;"></div>
<div class="b" style="left:12.50px;top:453.60px;width:191.00px;height:7.40px;background:#fafafa;border:0.6px solid #d0d0d0;border-radius:1px;"></div>
<div class="b" style="left:106px;top:455.5px;width:3px;height:4px;border-left:0.6px solid #b8b8b8;border-right:0.6px solid #b8b8b8;"></div>
<div class="b" style="left:378.00px;top:453.00px;width:7.00px;height:8.50px;background:#fcfcfc;border:1px solid #c8c8c8;border-radius:1px;"></div>
<svg style="left:379.5px;top:455px" width="4" height="5" viewBox="0 0 4 5"><path d="M0.8 0.6 L0.8 4.2 L3 2.4 Z" fill="#111"/></svg>
<div class="b" style="left:0px;top:468px;width:397px;height:10.6px;overflow:hidden;">
<div class="b" style="left:3.3px;top:3.4px;width:194.2px;height:12px;background:linear-gradient(#ffffff,#f4f4f4);border:1px solid #bcbcbc;border-radius:2px;"></div>
<div class="t" style="left:0.4px;width:200px;text-align:center;top:5.45px;font-size:6.35px;color:#444;">Calculate Measurements</div>
<div class="t" style="left:209.6px;top:6.55px;font-size:6.35px;color:#333;">Auto Update</div>
</div>
<svg style="left:201px;top:472.5px" width="7" height="6" viewBox="0 0 7 6"><path d="M0.8 2.8 L2.6 5 L6 0.5" stroke="#111" stroke-width="1.1" fill="none"/></svg>
<div class="b" style="left:0.50px;top:479.40px;width:404.50px;height:11.80px;background:linear-gradient(#ffffff,#f7f7f7);border:1px solid #bdbdbd;border-bottom-color:#a8a8a8;border-radius:1.5px;"></div>
<svg style="left:3.5px;top:482.8px" width="6" height="4" viewBox="0 0 6 4"><path d="M0.3 0.3 L5.2 0.3 L2.75 3.1 Z" fill="#111"/></svg>
<div class="t" style="left:12.50px;top:481.85px;font-size:6.35px;color:#000;font-weight:normal;">Data Probe</div>
<div class="b" style="left:6.40px;top:498.40px;width:7.10px;height:6.80px;background:#fff;border:0.8px solid #b8b8b8;border-radius:1px;"></div>
<div class="t" style="left:16.00px;top:497.85px;font-size:6.35px;color:#000;font-weight:normal;">Show Zoomed Slice</div>
<div class="t" style="left:8.60px;top:510.95px;font-size:6.35px;color:#000;font-weight:normal;">L</div>
<div class="t" style="left:8.60px;top:518.85px;font-size:6.35px;color:#000;font-weight:normal;">F</div>
<div class="t" style="left:8.60px;top:526.55px;font-size:6.35px;color:#000;font-weight:normal;">B</div>
<div class="b" style="left:408px;top:32px;width:392px;height:510px;background:#000;"></div>
<svg style="left:408px;top:32px" width="196.5" height="255" viewBox="0 0 196.5 255">
<defs>
<filter id="blur3" x="-50%" y="-50%" width="200%" height="200%"><feGaussianBlur stdDeviation="3"/></filter>
<linearGradient id="headStroke" x1="0" y1="0" x2="0" y2="1"><stop offset="0" stop-color="#5a5a5a"/><stop offset="0.55" stop-color="#444"/><stop offset="1" stop-color="#333"/></linearGradient>
<filter id="blur5" x="-50%" y="-50%" width="200%" height="200%"><feGaussianBlur stdDeviation="5"/></filter>
<filter id="blur1" x="-50%" y="-50%" width="200%" height="200%"><feGaussianBlur stdDeviation="1"/></filter>
<filter id="blur07" x="-50%" y="-50%" width="200%" height="200%"><feGaussianBlur stdDeviation="0.6"/></filter>
</defs>
<rect x="0" y="8" width="196.5" height="247" fill="#1c1c1c"/>
<g filter="url(#blur3)">
 <path d="M99 60 C122 60 142 90 146 125 C149 152 130 174 99 174 C68 174 49 152 52 125 C56 90 76 60 99 60 Z" fill="#282828" stroke="url(#headStroke)" stroke-width="5"/>
 <ellipse cx="98" cy="78" rx="22" ry="10" fill="none" stroke="#3c3c3c" stroke-width="3"/>
 <ellipse cx="97" cy="95" rx="13" ry="8" fill="#363636"/>
 <ellipse cx="100" cy="135" rx="30" ry="18" fill="#2e2e2e"/>
 <ellipse cx="100" cy="162" rx="24" ry="8" fill="#2a2a2a"/>
</g>
<defs>
<linearGradient id="axBlue" x1="0" y1="0" x2="0" y2="1"><stop offset="0" stop-color="#98d4f0"/><stop offset="0.42" stop-color="#80bede"/><stop offset="0.5" stop-color="#5e9cbc"/><stop offset="1" stop-color="#5a94b0"/></linearGradient>
<linearGradient id="axRed" x1="0" y1="0" x2="1" y2="0"><stop offset="0" stop-color="#b86454"/><stop offset="0.55" stop-color="#c87466"/><stop offset="1" stop-color="#eaa4a4"/></linearGradient>
</defs>
<g filter="url(#blur07)">
 <path d="M87.4 101.7 L90.7 99.2 L96.9 97.9 L104.4 100.4 L108.1 104.2 L106.9 110.4 L101.9 114.2 L94.4 115.4 L89.4 112.9 L86.9 107.9 Z" fill="#b4d8bc" stroke="#d0ecd4" stroke-width="0.8"/>
 <path d="M62 115.4 L65.7 112.4 L71.9 111.7 L78.2 109.9 L83.2 112.9 L84.4 119.1 L81.9 124.1 L74.4 126.6 L69.4 127.4 L63.2 125.4 L60.7 120.4 Z" fill="url(#axRed)" stroke="#d08070" stroke-width="0.7"/>
 <path d="M115.6 112.9 L119.4 108.4 L126.9 107.4 L134.3 109.2 L138.8 113.4 L139.3 120.4 L141.8 122.9 L140.6 132.9 L134.3 139.1 L126.9 140.4 L120.6 136.6 L116.9 130.4 L115.6 122.9 Z" fill="url(#axBlue)" stroke="#a8dcee" stroke-width="0.8"/>
 <circle cx="109.9" cy="114.9" r="2.6" fill="#f4f4ec" stroke="#c8c8b8" stroke-width="0.5"/>
 <circle cx="76.9" cy="109.4" r="1.2" fill="#e8d850"/>
 <circle cx="72" cy="110.8" r="1" fill="#e0c850"/>
</g>
<line x1="128.2" y1="8" x2="128.2" y2="255" stroke="#b89a5a" stroke-width="0.9"/>
<line x1="0" y1="124.7" x2="196.5" y2="124.7" stroke="#6e8a5a" stroke-width="0.9"/>
<!-- header -->
<rect x="0" y="0" width="196.5" height="8" fill="#e2573c"/>
<rect x="10" y="0.6" width="7.6" height="7" fill="#f09a84"/>
<rect x="145.7" y="0" width="50.8" height="8" fill="#f2836a"/>
<rect x="32" y="2.9" width="88" height="3.1" rx="1.5" fill="#a89a9a"/>
<rect x="120" y="2.9" width="24.5" height="3.1" rx="1.5" fill="#f4e4e0"/>
<rect x="117.8" y="1.2" width="4" height="5.6" rx="1" fill="#f8f8f8" stroke="#9a9a9a" stroke-width="0.4"/>
<ellipse cx="4.8" cy="4" rx="1.5" ry="1.2" fill="#a82a10"/>
<circle cx="23" cy="4" r="2.2" fill="#8a1008"/>
<path d="M23 1.8 A2.2 2.2 0 0 0 23 6.2 Q21.8 4 23 1.8 Z" fill="#f06a4a"/>
</svg>
<div class="t" style="left:419.3px;top:32.6px;font-size:6.8px;color:#3a0c06;">R</div>
<div class="t" style="left:555px;top:32.6px;font-size:6.4px;color:#3a1a10;">S: -986.474mm</div>
<svg style="left:604.5px;top:32px" width="195.5" height="255" viewBox="0 0 195.5 255">
<defs>
<linearGradient id="bg3d" x1="0" y1="0" x2="0" y2="1">
 <stop offset="0" stop-color="#7176b6"/>
 <stop offset="0.5" stop-color="#9a9ed4"/>
 <stop offset="1" stop-color="#c4c4ec"/>
</linearGradient>
<radialGradient id="gBlue" cx="0.4" cy="0.35" r="0.7"><stop offset="0" stop-color="#6ab8d8"/><stop offset="0.7" stop-color="#3c8cb0"/><stop offset="1" stop-color="#1e5a78"/></radialGradient>
<radialGradient id="gGreen" cx="0.4" cy="0.35" r="0.7"><stop offset="0" stop-color="#7ab896"/><stop offset="0.7" stop-color="#58987a"/><stop offset="1" stop-color="#2e5a44"/></radialGradient>
<radialGradient id="gGreen2" cx="0.4" cy="0.35" r="0.7"><stop offset="0" stop-color="#8ccf8a"/><stop offset="0.7" stop-color="#58a060"/><stop offset="1" stop-color="#2a5a30"/></radialGradient>
<radialGradient id="gBrown" cx="0.5" cy="0.45" r="0.7"><stop offset="0" stop-color="#c07060"/><stop offset="0.7" stop-color="#9a5040"/><stop offset="1" stop-color="#5a2a1e"/></radialGradient>
<radialGradient id="gBrown2" cx="0.4" cy="0.35" r="0.7"><stop offset="0" stop-color="#d0927a"/><stop offset="0.7" stop-color="#a86450"/><stop offset="1" stop-color="#603428"/></radialGradient>
<radialGradient id="gYel" cx="0.4" cy="0.35" r="0.7"><stop offset="0" stop-color="#f6f060"/><stop offset="0.7" stop-color="#d8cc20"/><stop offset="1" stop-color="#8a8010"/></radialGradient>
<radialGradient id="gTan" cx="0.4" cy="0.35" r="0.7"><stop offset="0" stop-color="#f8dca0"/><stop offset="1" stop-color="#c8a060"/></radialGradient>
<radialGradient id="gRed" cx="0.4" cy="0.35" r="0.7"><stop offset="0" stop-color="#e88a68"/><stop offset="0.7" stop-color="#c85e44"/><stop offset="1" stop-color="#7a2a1a"/></radialGradient>
</defs>
<rect x="0" y="8" width="195.5" height="247" fill="url(#bg3d)"/>
<g stroke="#c070c8" stroke-width="1.1" opacity="0.75">
 <line x1="32.5" y1="8" x2="113" y2="86"/>
 <line x1="158" y1="99" x2="195.5" y2="95"/>
 <line x1="108" y1="150" x2="65" y2="255"/>
</g>
<g stroke-width="0.8">
 <path d="M53.3 92.2 C56 86 61 81.5 66.2 81.1 C70 80.5 75 80.8 77.9 82.6 C80 84 81.5 87.5 83.3 90.1 C87 95 91 97 94 100.8 C98 105 100.6 109 100.4 113.6 C100.5 119 99.5 123 97.2 126.5 C94.5 129.5 90 130.5 86.5 130.7 C82 131 79.5 130.8 76.8 131.8 C73.5 133.5 71.5 137.5 68.3 138.2 C63 139 58 136 55.5 132.9 C51.5 128 48.5 123 48 119 C47.2 114 48 110 49 107.2 C50 101 51.5 96.5 53.3 92.2 Z" fill="url(#gBlue)" stroke="#1a3a50"/>
 <path d="M104.6 124.3 C106 116 112 107 119.6 105.1 C125 104 130 109 132.4 115.8 C135 123 136 131 134.6 137.1 C133 143 127 147.5 121.7 147.8 C115 148 108 146 104.6 141.4 C102.5 137 103.5 130 104.6 124.3 Z" fill="url(#gGreen)" stroke="#243a28"/>
 <path d="M121.5 131 C123 127 126 125 129 125.5 L127.5 132.5 Z" fill="#4a2a10"/>
 <ellipse cx="141" cy="134" rx="9.6" ry="8.3" fill="url(#gYel)" stroke="#5a5010"/>
 <ellipse cx="141" cy="113.6" rx="16" ry="14.2" fill="url(#gBrown)" stroke="#3a1a10"/>
 <ellipse cx="144.2" cy="92.2" rx="11.8" ry="10.3" fill="url(#gBrown2)" stroke="#3a1a10"/>
 <ellipse cx="117.9" cy="90.5" rx="6.8" ry="5.1" fill="url(#gTan)" stroke="#7a6030"/>
 <ellipse cx="79" cy="138.2" rx="8.5" ry="7.5" fill="url(#gRed)" stroke="#4a1a10"/>
 <ellipse cx="89.7" cy="146.8" rx="11.5" ry="9" fill="url(#gRed)" stroke="#4a1a10"/>
 <ellipse cx="63" cy="172.4" rx="15.5" ry="15.5" fill="url(#gGreen2)" stroke="#1e3a20"/>
 <circle cx="100.8" cy="123.2" r="3.6" fill="#f0f0e0" stroke="#8a8a70" stroke-width="0.4"/>
</g>
<linearGradient id="hdr3d" x1="0" y1="0" x2="0" y2="1"><stop offset="0" stop-color="#7c96ec"/><stop offset="1" stop-color="#6a82da"/></linearGradient>
<rect x="0" y="0" width="195.5" height="8" fill="url(#hdr3d)"/>
<rect x="9.5" y="0.4" width="8" height="7.4" fill="#bccaf6"/>
<rect x="3.6" y="3" width="2.6" height="2" fill="#2a3488"/>
<path d="M22.8 0.9 L25.9 4 L22.8 7.1 L19.7 4 Z" fill="none" stroke="#3a48a0" stroke-width="0.8"/>
</svg>
<div class="t" style="left:615px;top:32.6px;font-size:6.6px;color:#101840;">1</div>
<svg style="left:408px;top:287px" width="196.5" height="255" viewBox="0 0 196.5 255">
<defs>
<filter id="spkS" x="-10%" y="-10%" width="120%" height="120%">
 <feTurbulence type="fractalNoise" baseFrequency="0.22" numOctaves="2" seed="7" result="noise"/>
 <feColorMatrix in="noise" type="matrix" values="0 0 0 0 0.34  0 0 0 0 0.34  0 0 0 0 0.34  1.2 0 0 0 -0.52" result="nA"/>
 <feGaussianBlur in="nA" stdDeviation="1.0" result="nB"/>
 <feGaussianBlur in="SourceGraphic" stdDeviation="3" result="bl"/>
 <feComposite in="nB" in2="bl" operator="in"/>
</filter>
<filter id="sb3" x="-50%" y="-50%" width="200%" height="200%"><feGaussianBlur stdDeviation="3"/></filter>
<filter id="sb1" x="-50%" y="-50%" width="200%" height="200%"><feGaussianBlur stdDeviation="1.2"/></filter>
<filter id="sb06" x="-50%" y="-50%" width="200%" height="200%"><feGaussianBlur stdDeviation="0.6"/></filter>
</defs>
<rect x="21" y="8" width="156" height="247" fill="#1c1c1c"/>
<filter id="texS" filterUnits="userSpaceOnUse" x="0" y="0" width="196" height="255" color-interpolation-filters="sRGB">
 <feTurbulence type="fractalNoise" baseFrequency="0.35" numOctaves="2" seed="7" result="n"/>
 <feColorMatrix in="n" type="matrix" values="0.75 0 0 0 0.12  0.75 0 0 0 0.12  0.75 0 0 0 0.12  0 0 0 0 1" result="g"/>
 <feGaussianBlur in="g" stdDeviation="0.55" result="gb"/>
 <feComposite in="SourceGraphic" in2="gb" operator="arithmetic" k1="2" k2="0" k3="0" k4="0" result="m"/>
 <feComposite in="m" in2="SourceGraphic" operator="in"/>
</filter>
<g filter="url(#texS)">
<g filter="url(#sb3)">
 <path d="M72 8 L116 8 C114 30 114 45 120 58 C132 68 137 90 137 120 L137 254 L50 254 L50 120 C50 95 56 78 62 62 C70 50 72 30 72 8 Z" fill="#262626"/>
 <path d="M118 60 C130 72 136 90 136 120 L136 170 L112 170 L110 80 Z" fill="#2e2e2e"/>
 <ellipse cx="100" cy="200" rx="30" ry="40" fill="#303030"/>
 <ellipse cx="75" cy="170" rx="18" ry="50" fill="#2a2a2a"/>
</g>
</g>
<g filter="url(#sb1)">
 <ellipse cx="81.5" cy="96.5" rx="9.5" ry="7.8" fill="#3c3c3c" stroke="#b4b4b4" stroke-width="2.8"/>
 <ellipse cx="112" cy="118" rx="7" ry="6" fill="none" stroke="#3e3e3e" stroke-width="2"/>
 <ellipse cx="94" cy="10" rx="10" ry="3" fill="#c8c8c0"/>
</g>
<circle cx="107" cy="137" r="2.4" fill="#ffffff" filter="url(#sb06)"/>
<circle cx="101" cy="149" r="1.3" fill="#9a9a9a" filter="url(#sb06)"/>
<g filter="url(#sb06)">
 <path d="M86.5 35 C86 31 89 29 92.5 30 C95 28.5 98 28 100 29.5 C103 28.5 106 31 105.5 35 C105 40 104 44 101 48 C99 49.5 96 49 94.5 47 C91 44 87 40 86.5 35 Z" fill="#4a8ea0" stroke="#a8dcea" stroke-width="0.8"/>
 <ellipse cx="91.2" cy="37" rx="4.6" ry="5.6" fill="#d4eef4"/>
</g>
<line x1="34" y1="39" x2="162" y2="39" stroke="#b8705e" stroke-width="0.9"/>
<line x1="95.3" y1="8" x2="95.3" y2="255" stroke="#90b488" stroke-width="0.9"/>
<rect x="0" y="0.4" width="196.5" height="8.1" fill="#ecd24e"/>
<rect x="0" y="7.6" width="196.5" height="0.9" fill="#c8a830"/>
<rect x="10" y="1" width="7.6" height="6.6" fill="#f2dc80"/>
<rect x="150" y="0.4" width="46.5" height="7.4" fill="#f4e08a"/>
<rect x="31" y="3.1" width="48" height="3.1" rx="1.5" fill="#7a9aa8"/>
<rect x="79" y="3" width="69" height="3.1" rx="1.5" fill="#eef0e8"/>
<rect x="77.2" y="1.3" width="4" height="5.6" rx="1" fill="#f8f8f8" stroke="#9a9a9a" stroke-width="0.4"/>
<path d="M3.2 3.4 L6.4 3.4 L4.8 5.6 Z" fill="#4a4010"/>
<circle cx="22.6" cy="4.2" r="2" fill="#5a5a30"/>
</svg>
<div class="t" style="left:418.4px;top:287.2px;font-size:7.2px;color:#2a2410;">Y</div>
<div class="t" style="left:559px;top:288.1px;font-size:6.4px;color:#2a2410;">R: -54.035mm</div>
<svg style="left:604.5px;top:287px" width="195.5" height="255" viewBox="0 0 195.5 255">
<defs>
<filter id="spkC" x="-10%" y="-10%" width="120%" height="120%">
 <feTurbulence type="fractalNoise" baseFrequency="0.22" numOctaves="2" seed="11" result="noise"/>
 <feColorMatrix in="noise" type="matrix" values="0 0 0 0 0.34  0 0 0 0 0.34  0 0 0 0 0.34  1.2 0 0 0 -0.52" result="nA"/>
 <feGaussianBlur in="nA" stdDeviation="1.0" result="nB"/>
 <feGaussianBlur in="SourceGraphic" stdDeviation="3" result="bl"/>
 <feComposite in="nB" in2="bl" operator="in"/>
</filter>
<filter id="cb3" x="-50%" y="-50%" width="200%" height="200%"><feGaussianBlur stdDeviation="3"/></filter>
<filter id="cb5" x="-50%" y="-50%" width="200%" height="200%"><feGaussianBlur stdDeviation="6"/></filter>
<filter id="cb1" x="-50%" y="-50%" width="200%" height="200%"><feGaussianBlur stdDeviation="1.2"/></filter>
<filter id="cb06" x="-50%" y="-50%" width="200%" height="200%"><feGaussianBlur stdDeviation="0.6"/></filter>
</defs>
<rect x="20" y="8" width="157" height="247" fill="#1c1c1c"/>
<filter id="texC" filterUnits="userSpaceOnUse" x="0" y="0" width="196" height="255" color-interpolation-filters="sRGB">
 <feTurbulence type="fractalNoise" baseFrequency="0.35" numOctaves="2" seed="11" result="n"/>
 <feColorMatrix in="n" type="matrix" values="0.75 0 0 0 0.12  0.75 0 0 0 0.12  0.75 0 0 0 0.12  0 0 0 0 1" result="g"/>
 <feGaussianBlur in="g" stdDeviation="0.55" result="gb"/>
 <feComposite in="SourceGraphic" in2="gb" operator="arithmetic" k1="2" k2="0" k3="0" k4="0" result="m"/>
 <feComposite in="m" in2="SourceGraphic" operator="in"/>
</filter>
<g filter="url(#texC)">
<g filter="url(#cb3)">
 <path d="M72 8 L124 8 L124 26 C140 28 156 30 164 40 C171 52 171 100 171 140 C172 180 172 210 172 254 L29 254 C29 210 29 180 29 140 C29 100 29 52 36 40 C44 30 58 28 72 26 Z" fill="#2a2a2a"/>
</g>
<g filter="url(#cb5)">
 <ellipse cx="78" cy="122" rx="30" ry="24" fill="#484848"/>
 <ellipse cx="78" cy="76" rx="20" ry="17" fill="#1f1f1f"/>
 <ellipse cx="134" cy="76" rx="18" ry="17" fill="#1f1f1f"/>
 <ellipse cx="95" cy="178" rx="42" ry="30" fill="#333"/>
 <ellipse cx="130" cy="125" rx="20" ry="20" fill="#353535"/>
 <ellipse cx="98" cy="30" rx="16" ry="16" fill="#333"/>
 <ellipse cx="49" cy="42" rx="10" ry="9" fill="#1e1e1e"/>
 <ellipse cx="146" cy="40" rx="10" ry="9" fill="#1e1e1e"/>
 <ellipse cx="95" cy="235" rx="40" ry="14" fill="#262626"/>
</g>
<g filter="url(#cb1)" stroke="#141414" stroke-width="3" fill="none">
 <path d="M44 56 C41 110 41 160 45 215"/>
 <path d="M156 56 C159 110 159 160 155 215"/>
</g>
<g filter="url(#cb1)" stroke="#444" stroke-width="1.6" fill="none">
 <path d="M62 150 C60 175 70 195 90 200"/>
 <path d="M128 150 C134 170 130 190 112 198"/>
</g>
</g>
<g filter="url(#cb1)">
 <ellipse cx="98.5" cy="11.5" rx="15" ry="4" fill="#a8a8a4"/><ellipse cx="92" cy="10.5" rx="6" ry="2.5" fill="#d8d8d0"/><ellipse cx="106" cy="10.5" rx="5" ry="2.5" fill="#d0d0c8"/>
</g>
<g filter="url(#cb06)">
 <path d="M88 214.6 Q94.5 216.5 101 214.6 Q105 214 105.2 218.5 Q104.5 225.3 94.5 225.3 Q84.5 225.3 83.8 218.5 Q84 214 88 214.6 Z" fill="#ffffff"/>
 <ellipse cx="113.5" cy="40.3" rx="7" ry="8" fill="#4a90a8" stroke="#a0d8ee" stroke-width="0.7"/>
 <ellipse cx="85.2" cy="36" rx="4.5" ry="6.5" fill="#c86a5a"/>
 <ellipse cx="86" cy="34" rx="2.3" ry="3" fill="#f8d0c0"/>
 <ellipse cx="107.5" cy="59.7" rx="3.5" ry="4.3" fill="#78e068"/>
 <circle cx="106.5" cy="48.5" r="1.5" fill="#c8603a"/>
</g>
<line x1="47.3" y1="39.7" x2="147.5" y2="39.7" stroke="#c84030" stroke-width="0.9"/>
<line x1="112.5" y1="8" x2="112.5" y2="255" stroke="#d8c850" stroke-width="0.9"/>
<rect x="0" y="0.5" width="195.5" height="8" fill="#6cc648"/>
<rect x="0" y="7.6" width="195.5" height="0.9" fill="#58a83a"/>
<rect x="10" y="1.1" width="7.6" height="6.6" fill="#98da7a"/>
<rect x="150.5" y="0.5" width="45" height="7.5" fill="#88de66"/>
<rect x="32.4" y="3.2" width="58.6" height="3.1" rx="1.5" fill="#6a9a90"/>
<rect x="91" y="3.2" width="59" height="3.1" rx="1.5" fill="#eef4ea"/>
<rect x="89" y="1.5" width="4" height="5.6" rx="1" fill="#f8f8f8" stroke="#9a9a9a" stroke-width="0.4"/>
<path d="M3.2 3.4 L6.4 3.4 L4.8 5.6 Z" fill="#1a3a10"/>
<circle cx="22.6" cy="4.2" r="2" fill="#2a4a20"/>
</svg>
<div class="t" style="left:614.4px;top:287.2px;font-size:7.2px;color:#102a08;">G</div>
<div class="t" style="left:756.9px;top:288.2px;font-size:6.4px;color:#102a08;">A: 223.065mm</div>
<div class="b" style="left:604px;top:32px;width:1px;height:510px;background:#7a7a7a;"></div>
<div class="b" style="left:408px;top:542px;width:392px;height:19px;background:#fff;"></div>
<svg style="left:771px;top:543px" width="29" height="18" viewBox="0 0 29 18"><rect x="1.3" y="1.3" width="16.4" height="15" rx="2" fill="#fafafa" stroke="#c8ccd8" stroke-width="0.6"/><circle cx="9.1" cy="8.4" r="6" fill="#e2301c"/><path d="M6.7 6 L11.5 10.8 M11.5 6 L6.7 10.8" stroke="#fff" stroke-width="1.5"/><path d="M21 17.5 L28.5 10 M24.5 17.5 L28.5 13.5" stroke="#b0b0b0" stroke-width="0.6"/></svg>
</body></html>
